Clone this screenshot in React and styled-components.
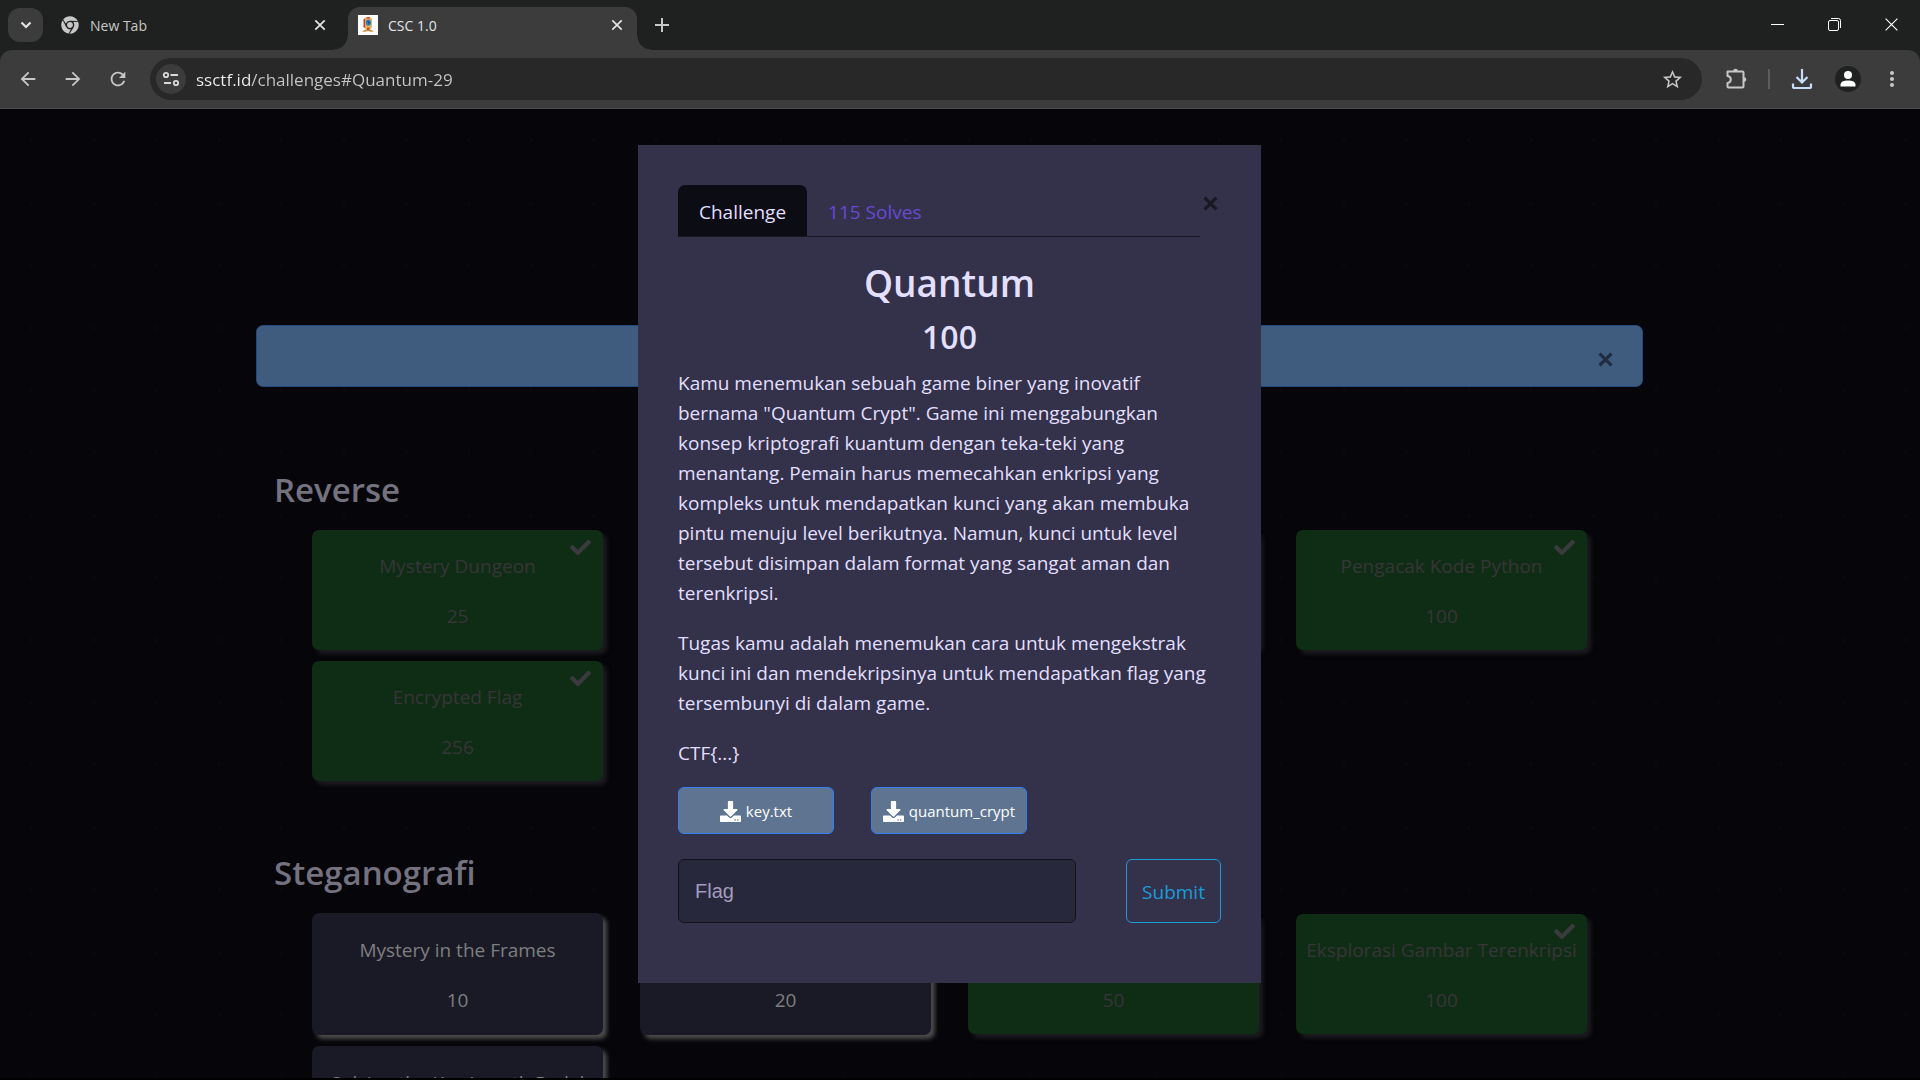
import React, { useState } from 'react';
import styled, { createGlobalStyle, css } from 'styled-components';
import { FaCheck, FaDownload, FaChrome } from 'react-icons/fa';
import { MdArrowBack, MdArrowForward, MdRefresh, MdStarBorder, MdMoreVert } from 'react-icons/md';

const sans = '"Segoe UI", "Open Sans", "Noto Sans", sans-serif';

const GlobalStyle = createGlobalStyle`
  *, *::before, *::after { box-sizing: border-box; }
  body { margin: 0; background: #000; font-family: ${sans}; }
  button, input { font-family: inherit; }
  h1, h2, h3, p { margin: 0; }
`;

const Window = styled.div`
  display: flex;
  flex-direction: column;
  height: 100vh;
  padding-bottom: 2px;
  overflow: hidden;
`;

/* ---------- browser chrome ---------- */

const TabStrip = styled.header`
  display: flex;
  align-items: flex-start;
  height: 50px;
  flex: none;
  padding-left: 8px;
  background: #1f2120;
`;

const PlainButton = styled.button`
  display: flex;
  align-items: center;
  justify-content: center;
  padding: 0;
  border: 0;
  background: none;
  color: #c7c7c7;
  cursor: pointer;
`;

const TabSearch = styled(PlainButton)`
  width: 35px;
  height: 34px;
  margin-top: 8px;
  border-radius: 12px;
  background: #3c3c3c;
  color: #e3e3e3;
`;

const BrowserTab = styled.div`
  position: relative;
  display: flex;
  align-items: center;
  height: 43px;
  margin-top: 7px;
  padding-bottom: 7px;
  font-size: 14px;
  color: #c7c7c7;
  ${p => p.$active ? css`
    width: 289px;
    gap: 10px;
    padding-left: 10px;
    padding-right: 14px;
    border-radius: 12px 12px 0 0;
    background: #3c3c3c;
    color: #e3e3e3;
    &::before, &::after {
      content: '';
      position: absolute;
      bottom: 0;
      width: 14px;
      height: 14px;
    }
    &::before {
      right: 100%;
      background: radial-gradient(circle at 0 0, transparent 13px, #3c3c3c 14px);
    }
    &::after {
      left: 100%;
      background: radial-gradient(circle at 100% 0, transparent 13px, #3c3c3c 14px);
    }
  ` : css`
    width: 300px;
    gap: 11px;
    margin-left: 5px;
    padding-left: 13px;
    padding-right: 22px;
  `}
`;

const TabTitle = styled.span`
  flex: 1;
`;

const TabButton = styled(PlainButton)`
  height: 12px;
  width: 12px;
  color: #e3e3e3;
`;

const NewTabButton = styled(PlainButton)`
  width: 34px;
  height: 34px;
  margin: 8px 0 0 8px;
`;

const WindowControls = styled.div`
  display: flex;
  margin-left: auto;
`;

const WindowButton = styled(PlainButton)`
  width: 57px;
  height: 49px;
  color: #fff;
`;

const ToolbarBack = styled.div`
  flex: none;
  background: #1f2120;
`;

const Toolbar = styled.div`
  display: flex;
  align-items: center;
  height: 59px;
  padding: 0 16px 0 14px;
  border-bottom: 1px solid #4b4b4b;
  border-radius: 12px 12px 0 0;
  background: #3c3c3c;
`;

const ToolGroup = styled.div`
  display: flex;
  align-items: center;
  gap: ${p => p.$gap}px;
`;

const ToolButton = styled(PlainButton)`
  width: ${p => p.$narrow ? 24 : 28}px;
  height: 28px;
`;

const Divider = styled.span`
  width: 2px;
  height: 20px;
  background: #5d5d5d;
`;

const Avatar = styled(PlainButton)`
  width: 26px;
  height: 26px;
  margin: 0 1px;
  border-radius: 50%;
  background: #1f2120;
`;

const Omnibox = styled.div`
  display: flex;
  align-items: center;
  flex: 1;
  gap: 10px;
  height: 42px;
  margin: 0 20px 0 18px;
  padding: 0 18px 0 6px;
  border-radius: 21px;
  background: #282828;
`;

const SiteInfo = styled(PlainButton)`
  width: 30px;
  height: 30px;
  border-radius: 50%;
  background: #3c3c3c;
`;

/* The host part of the URL is brighter than the path. */
const Address = styled.input`
  flex: 1;
  min-width: 0;
  padding: 0;
  border: 0;
  outline: 0;
  background: linear-gradient(to right, #f0f0f0 54px, #c7c7c7 54px);
  background-clip: text;
  -webkit-background-clip: text;
  color: transparent;
  caret-color: #fff;
  font-size: 17px;
`;

/* ---------- page ---------- */

const Viewport = styled.main`
  position: relative;
  flex: 1;
  min-height: 0;
  overflow: hidden;
  padding: 216px 21px 0 0;
  background-color: #05050a;
  background-image:
    radial-gradient(circle at 31px 31px, #09090e 1px, transparent 2px),
    radial-gradient(circle at 94px 31px, #09090e 1px, transparent 2px),
    radial-gradient(circle at 31px 94px, #09090e 1px, transparent 2px),
    radial-gradient(circle at 94px 94px, #09090e 1px, transparent 2px);
  background-size: 125px 125px;
`;

const Container = styled.div`
  max-width: 1387px;
  margin: 0 auto;
`;

const Alert = styled.div`
  display: flex;
  align-items: center;
  justify-content: flex-end;
  height: 62px;
  margin-bottom: 83px;
  padding: 7px 26px 0 0;
  border: 1px solid #214a82;
  border-radius: 7px;
  background: #3f5b7e;
`;

const Category = styled.section`
  margin-bottom: 72px;
`;

const CategoryTitle = styled.h3`
  margin-bottom: 20px;
  padding-left: 18px;
  font-size: 33px;
  font-weight: 600;
  line-height: 40px;
  color: #74727f;
`;

const CardGrid = styled.div`
  display: grid;
  grid-template-columns: repeat(4, 1fr);
  align-items: center;
  gap: 11px 37px;
  padding: 0 56px;
`;

const Card = styled.button`
  position: relative;
  display: flex;
  flex-direction: column;
  align-items: center;
  gap: 20px;
  width: 100%;
  border: 0;
  border-radius: 7px;
  font-size: 19px;
  line-height: 30px;
  white-space: nowrap;
  cursor: pointer;
  ${p => p.$solved ? css`
    padding: 21px 0 19px;
    background: #0f2d14;
    color: #373539;
    box-shadow: 4px 4px 4px #1c1c20;
  ` : css`
    padding: 22px 0 20px;
    background: #1a1a26;
    color: #7f7f7f;
    box-shadow: 4px 4px 4px #4b4b4b;
  `}
`;

const CardLine = styled.span`
  min-height: 30px;
`;

const Solved = styled(FaCheck)`
  position: absolute;
  top: 7px;
  right: 12px;
  font-size: 21px;
  color: #3b3a3e;
`;

/* ---------- modal ---------- */

const Overlay = styled.div`
  position: absolute;
  inset: 0 21px 0 0;
  display: flex;
  align-items: flex-start;
  justify-content: center;
  padding-top: 36px;
`;

const Modal = styled.div`
  width: 100%;
  max-width: 623px;
  padding: 40px 40px 60px;
  background: #33324a;
  color: #e3dfff;
  font-size: 19px;
  line-height: 30px;
`;

const ModalHead = styled.div`
  display: flex;
  align-items: flex-start;
  margin-bottom: 22px;
`;

const Tabs = styled.div`
  display: flex;
  flex: 1;
  border-bottom: 1px solid #171722;
`;

const ModalTab = styled.button`
  padding: 12px 21px 9px;
  border: 0;
  border-radius: 7px 7px 0 0;
  background: ${p => p.$active ? '#0c0c15' : 'none'};
  color: ${p => p.$active ? '#e3dfff' : '#6a48d7'};
  font-size: 19px;
  line-height: 30px;
  cursor: pointer;
`;

const CloseButton = styled(PlainButton)`
  width: 21px;
  height: 36px;
  color: ${p => p.$color};
`;

const ModalTitle = styled.h2`
  margin-bottom: 10px;
  font-size: 37px;
  font-weight: 600;
  line-height: 48px;
  text-align: center;
`;

const Points = styled.h3`
  margin-bottom: 11px;
  font-size: 32px;
  font-weight: 600;
  line-height: 40px;
  text-align: center;
`;

const Description = styled.div`
  display: flex;
  flex-direction: column;
  gap: 20px;
  margin-bottom: 19px;
`;

const Files = styled.div`
  display: flex;
  gap: 37px;
  margin-bottom: 25px;
`;

const FileLink = styled.a`
  display: flex;
  align-items: center;
  justify-content: center;
  gap: 5px;
  width: 156px;
  height: 47px;
  padding-top: 1px;
  border: 1px solid #2f80f5;
  border-radius: 6px;
  background: #5e7491;
  color: #fff;
  font-size: 15px;
  text-decoration: none;
`;

const FlagForm = styled.form`
  display: flex;
  gap: 50px;
`;

const FlagInput = styled.input`
  flex: 1;
  min-width: 0;
  height: 64px;
  padding: 0 16px;
  border: 1px solid #12121b;
  border-radius: 6px;
  outline: 0;
  background: #28283d;
  color: #e3dfff;
  font-family: "Liberation Sans", Arial, sans-serif;
  font-size: 20px;
  &::placeholder { color: #a29bbd; opacity: 1; }
`;

const Submit = styled.button`
  width: 95px;
  height: 64px;
  padding: 2px 0 0;
  border: 1px solid #1b9bd8;
  border-radius: 6px;
  background: none;
  color: #1b9bd8;
  font-size: 19px;
  cursor: pointer;
`;

/* ---------- icons ---------- */

const Cross = ({ size, weight }) => (
  <svg width={size} height={size} viewBox="0 0 14 14" fill="none" stroke="currentColor"
    strokeWidth={weight} aria-hidden="true">
    <path d="M1.5 1.5 12.5 12.5M12.5 1.5 1.5 12.5" />
  </svg>
);

const Crest = () => (
  <svg width="20" height="20" viewBox="0 0 20 20" aria-hidden="true">
    <path d="M0 0h20v20H0z" fill="#fff" />
    <path d="M6 3.5Q10 1 14 3.5V11q0 3-4 5-4-2-4-5z" fill="#e3b36c" />
    <path d="M6.3 4v8.5" stroke="#c8402f" strokeWidth="1.6" />
    <path d="M8.5 2.8h3.5" stroke="#d24b32" strokeWidth="1.4" />
    <ellipse cx="10.4" cy="7.6" rx="2.6" ry="3.2" fill="#2a86b8" />
    <path d="M9.4 6.300l2 .8-.8 2.2" stroke="#173d63" strokeWidth="1" fill="none" />
    <path d="M4 16.500q3-2.500 6-1.200 3-1.300 6 1.200l-3 .2-3-.8-3 .8z" fill="#c98a3a" />
    <path d="M9 12.500h2.500V15H9z" fill="#b5562b" />
  </svg>
);

const Puzzle = () => (
  <svg width="24" height="24" viewBox="0 0 24 24" aria-hidden="true" fill="none" stroke="currentColor" strokeWidth="2" strokeLinejoin="round">
    <path d="M3.500 4.500H18.500Q19.500 4.500 19.500 5.500V19.500Q19.500 20.500 18.500 20.500H4.500Q3.500 20.500 3.500 19.500V16Q6.800 15.500 6.800 12.500T3.500 9Z" />
    <path d="M9.200 4a2.300 2.300 0 0 1 4.600 0zM20 10.200a2.300 2.300 0 0 1 0 4.600z" fill="currentColor" stroke="none" />
  </svg>
);

const Tray = () => (
  <svg width="22" height="22" viewBox="0 0 22 22" aria-hidden="true" fill="none" stroke="#c8dcfb" strokeWidth="2.200">
    <path d="M11 1v13M5.500 9l5.500 5.500L16.500 9M2 15.500v3q0 1.500 1.500 1.500h15q1.500 0 1.500-1.500v-3" />
  </svg>
);

const Tune = () => (
  <svg width="18" height="18" viewBox="0 0 18 18" aria-hidden="true" fill="none" stroke="#d8d8d8" strokeWidth="1.800">
    <circle cx="4" cy="5" r="2.200" />
    <path d="M8.500 5H16M2 13h7" />
    <circle cx="14" cy="13" r="2.200" />
  </svg>
);

const Person = () => (
  <svg width="18" height="18" viewBox="0 0 18 18" aria-hidden="true" fill="#fff">
    <circle cx="9" cy="5" r="4" />
    <path d="M1.500 16.500v-1.700q0-4.300 7.500-4.300t7.500 4.300v1.700z" />
  </svg>
);

const reverse = [
  { name: 'Mystery Dungeon', points: 25, solved: true },
  { solved: true },
  { solved: true },
  { name: 'Pengacak Kode Python', points: 100, solved: true },
  { name: 'Encrypted Flag', points: 256, solved: true },
];

const steganografi = [
  { name: 'Mystery in the Frames', points: 10 },
  { points: 20 },
  { points: 50, solved: true },
  { name: 'Eksplorasi Gambar Terenkripsi', points: 100, solved: true },
  { name: 'Solving the Key Length Pedal' },
];

const Challenges = ({ title, items }) => (
  <Category>
    <CategoryTitle>{title}</CategoryTitle>
    <CardGrid>
      {items.map((c, i) => (
        <Card key={i} type="button" $solved={c.solved}>
          <CardLine>{c.name}</CardLine>
          <CardLine>{c.points}</CardLine>
          {c.solved && <Solved />}
        </Card>
      ))}
    </CardGrid>
  </Category>
);

export default function App() {
  const [url, setUrl] = useState('ssctf.id/challenges#Quantum-29');
  return (
    <Window>
      <GlobalStyle />
      <TabStrip>
        <TabSearch aria-label="Search tabs">
          <svg width="12" height="8" viewBox="0 0 12 8" fill="none" stroke="currentColor" strokeWidth="2.200"><path d="M1.500 1.500 6 6l4.500-4.500" /></svg>
        </TabSearch>
        <BrowserTab>
          <FaChrome size={18} />
          <TabTitle>New Tab</TabTitle>
          <TabButton aria-label="Close tab"><Cross size={12} weight={2} /></TabButton>
        </BrowserTab>
        <BrowserTab $active>
          <Crest />
          <TabTitle>CSC 1.0</TabTitle>
          <TabButton aria-label="Close tab"><Cross size={12} weight={2} /></TabButton>
        </BrowserTab>
        <NewTabButton aria-label="New tab">
          <svg width="14" height="14" viewBox="0 0 14 14" stroke="currentColor" strokeWidth="2"><path d="M7 0v14M0 7h14" /></svg>
        </NewTabButton>
        <WindowControls>
          <WindowButton aria-label="Minimize">
            <svg width="13" height="13" viewBox="0 0 13 13" stroke="currentColor"><path d="M0 6.500h13" /></svg>
          </WindowButton>
          <WindowButton aria-label="Restore">
            <svg width="13" height="13" viewBox="0 0 13 13" fill="none" stroke="currentColor">
              <rect x=".5" y="2.500" width="10" height="10" rx="1.500" />
              <path d="M3 .5h7.500q2 0 2 2V10" />
            </svg>
          </WindowButton>
          <WindowButton aria-label="Close"><Cross size={15} weight={1.1} /></WindowButton>
        </WindowControls>
      </TabStrip>
      <ToolbarBack>
        <Toolbar>
          <ToolGroup $gap={17}>
            <ToolButton aria-label="Back"><MdArrowBack size={22} /></ToolButton>
            <ToolButton aria-label="Forward"><MdArrowForward size={22} /></ToolButton>
            <ToolButton aria-label="Reload"><MdRefresh size={22} /></ToolButton>
          </ToolGroup>
          <Omnibox>
            <SiteInfo aria-label="Site information"><Tune /></SiteInfo>
            <Address aria-label="Address" value={url} onChange={e => setUrl(e.target.value)} />
            <PlainButton aria-label="Bookmark"><MdStarBorder size={23} /></PlainButton>
          </Omnibox>
          <ToolGroup $gap={18}>
            <ToolButton aria-label="Extensions"><Puzzle /></ToolButton>
            <Divider />
            <ToolButton aria-label="Downloads"><Tray /></ToolButton>
            <Avatar aria-label="Profile"><Person /></Avatar>
            <ToolButton $narrow aria-label="Menu"><MdMoreVert size={24} /></ToolButton>
          </ToolGroup>
        </Toolbar>
      </ToolbarBack>
      <Viewport>
        <Container>
          <Alert>
            <CloseButton $color="#1f2d3f" aria-label="Dismiss"><Cross size={15} weight={3} /></CloseButton>
          </Alert>
          <Challenges title="Reverse" items={reverse} />
          <Challenges title="Steganografi" items={steganografi} />
        </Container>
        <Overlay>
          <Modal role="dialog" aria-label="Quantum">
            <ModalHead>
              <Tabs>
                <ModalTab $active>Challenge</ModalTab>
                <ModalTab>115 Solves</ModalTab>
              </Tabs>
              <CloseButton $color="#191924" aria-label="Close"><Cross size={15} weight={3} /></CloseButton>
            </ModalHead>
            <ModalTitle>Quantum</ModalTitle>
            <Points>100</Points>
            <Description>
              <p>
                Kamu menemukan sebuah game biner yang inovatif bernama "Quantum Crypt". Game ini menggabungkan
                konsep kriptografi kuantum dengan teka-teki yang menantang. Pemain harus memecahkan enkripsi yang
                kompleks untuk mendapatkan kunci yang akan membuka pintu menuju level berikutnya. Namun, kunci untuk
                level tersebut disimpan dalam format yang sangat aman dan terenkripsi.
              </p>
              <p>
                Tugas kamu adalah menemukan cara untuk mengekstrak kunci ini dan mendekripsinya untuk mendapatkan
                flag yang tersembunyi di dalam game.
              </p>
              <p>{'CTF{...}'}</p>
            </Description>
            <Files>
              <FileLink href="#key.txt"><FaDownload size={21} />key.txt</FileLink>
              <FileLink href="#quantum_crypt"><FaDownload size={21} />quantum_crypt</FileLink>
            </Files>
            <FlagForm onSubmit={e => e.preventDefault()}>
              <FlagInput aria-label="Flag" placeholder="Flag" />
              <Submit type="submit">Submit</Submit>
            </FlagForm>
          </Modal>
        </Overlay>
      </Viewport>
    </Window>
  );
}
